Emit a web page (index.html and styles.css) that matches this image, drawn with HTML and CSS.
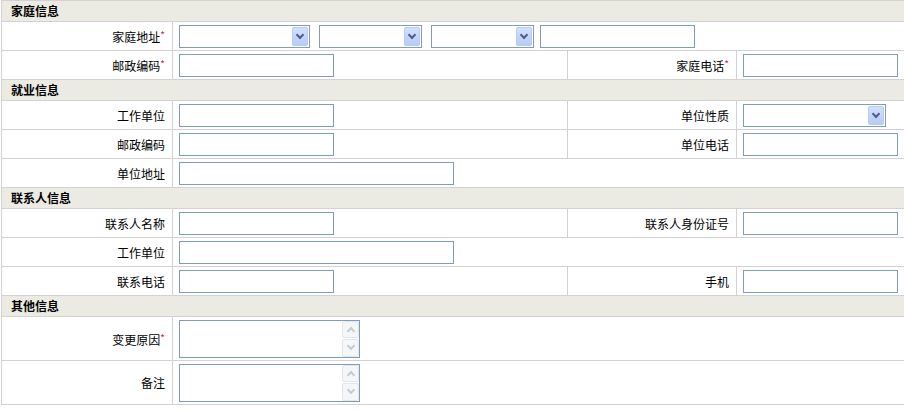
FILE: index.html
```html
<!DOCTYPE html>
<html lang="zh-CN">
<head>
  <meta charset="UTF-8">
  <title>信息变更</title>
  <link rel="stylesheet" href="styles.css">
</head>
<body>
  <table class="form">
    <colgroup>
      <col class="c-label">
      <col class="c-field">
      <col class="c-label2">
      <col class="c-field2">
    </colgroup>

    <tr class="section"><th colspan="4">家庭信息</th></tr>
    <tr>
      <td class="label">家庭地址<span class="req">*</span></td>
      <td class="field" colspan="3">
        <span class="sel province"><select></select><span class="arrow"></span></span>
        <span class="sel city"><select></select><span class="arrow"></span></span>
        <span class="sel district"><select></select><span class="arrow"></span></span>
        <input type="text" class="txt">
      </td>
    </tr>
    <tr>
      <td class="label">邮政编码<span class="req">*</span></td>
      <td class="field"><input type="text" class="txt"></td>
      <td class="label">家庭电话<span class="req">*</span></td>
      <td class="field"><input type="text" class="txt"></td>
    </tr>

    <tr class="section"><th colspan="4">就业信息</th></tr>
    <tr>
      <td class="label">工作单位</td>
      <td class="field"><input type="text" class="txt"></td>
      <td class="label">单位性质</td>
      <td class="field"><span class="sel kind"><select></select><span class="arrow"></span></span></td>
    </tr>
    <tr>
      <td class="label">邮政编码</td>
      <td class="field"><input type="text" class="txt"></td>
      <td class="label">单位电话</td>
      <td class="field"><input type="text" class="txt"></td>
    </tr>
    <tr>
      <td class="label">单位地址</td>
      <td class="field" colspan="3"><input type="text" class="txt wide"></td>
    </tr>

    <tr class="section"><th colspan="4">联系人信息</th></tr>
    <tr>
      <td class="label">联系人名称</td>
      <td class="field"><input type="text" class="txt"></td>
      <td class="label">联系人身份证号</td>
      <td class="field"><input type="text" class="txt"></td>
    </tr>
    <tr>
      <td class="label">工作单位</td>
      <td class="field" colspan="3"><input type="text" class="txt wide"></td>
    </tr>
    <tr>
      <td class="label">联系电话</td>
      <td class="field"><input type="text" class="txt"></td>
      <td class="label">手机</td>
      <td class="field"><input type="text" class="txt"></td>
    </tr>

    <tr class="section"><th colspan="4">其他信息</th></tr>
    <tr class="tall">
      <td class="label">变更原因<span class="req">*</span></td>
      <td class="field" colspan="3">
        <span class="area"><textarea></textarea><span class="scroll"><span class="up"></span><span class="down"></span></span></span>
      </td>
    </tr>
    <tr class="tall">
      <td class="label">备注</td>
      <td class="field" colspan="3">
        <span class="area"><textarea></textarea><span class="scroll"><span class="up"></span><span class="down"></span></span></span>
      </td>
    </tr>
  </table>
</body>
</html>
```

FILE: styles.css
```css
body {
  margin: 0;
  padding: 0 0 0 1px;
  background: #fff;
  font-family: "Noto Sans CJK SC", "DejaVu Sans", sans-serif;
  font-size: 12px;
  color: #000;
}

.form {
  border-collapse: collapse;
  table-layout: fixed;
  width: 904px;
}

.c-label { width: 171px; }
.c-field { width: 395px; }
.c-label2 { width: 169px; }
.c-field2 { width: 169px; }

.form td, .form th {
  border: 1px solid #d2d2d2;
  padding: 0;
  height: 28px;
  white-space: nowrap;
}

.section th {
  background: #ebebe3;
  height: 20px;
  text-align: left;
  padding-left: 9px;
  font-weight: bold;
  font-size: 12px;
  line-height: 20px;
}

.label {
  text-align: right;
  padding-right: 7px !important;
}

.req {
  color: #d0205a;
  font-size: 10px;
  vertical-align: 3px;
}

.field {
  padding-left: 6px !important;
  font-size: 0;
}

.txt {
  box-sizing: border-box;
  width: 155px;
  height: 23px;
  margin: 0;
  border: 1px solid #7f9db9;
  padding: 0 3px;
  font: 12px "Noto Sans CJK SC", sans-serif;
  vertical-align: middle;
  outline: none;
}

.txt.wide { width: 275px; }

/* select with XP style arrow */
.sel {
  position: relative;
  display: inline-block;
  height: 23px;
  vertical-align: middle;
}
.sel select {
  -webkit-appearance: none;
  appearance: none;
  box-sizing: border-box;
  width: 100%;
  height: 23px;
  margin: 0;
  border: 1px solid #7f9db9;
  background: #fff;
  outline: none;
}
.sel .arrow {
  position: absolute;
  right: 2px;
  top: 2px;
  width: 16px;
  height: 19px;
  box-sizing: border-box;
  border: 1px solid #b9cbf3;
  border-radius: 2px;
  background: linear-gradient(#d3e0fd, #b6cbf6);
}
.sel .arrow::after {
  content: "";
  position: absolute;
  left: 4px;
  top: 4px;
  width: 4px;
  height: 4px;
  border-right: 2px solid #4d6185;
  border-bottom: 2px solid #4d6185;
  transform: rotate(45deg);
}
.province { width: 131px; margin-right: 9px; }
.city { width: 103px; margin-right: 9px; }
.district { width: 103px; margin-right: 6px; }
.kind { width: 143px; }

/* textarea with disabled-looking scroll arrows */
.area {
  position: relative;
  display: inline-block;
  width: 181px;
  height: 38px;
  vertical-align: middle;
}
.area textarea {
  box-sizing: border-box;
  width: 100%;
  height: 100%;
  margin: 0;
  border: 1px solid #7f9db9;
  resize: none;
  overflow: hidden;
  outline: none;
}
.scroll {
  position: absolute;
  right: 1px;
  top: 1px;
  bottom: 1px;
  width: 17px;
  display: flex;
  flex-direction: column;
  gap: 1px;
  background: #fff;
}
.scroll span {
  position: relative;
  flex: 1;
  border: 1px solid #e2e6ee;
  border-radius: 2px;
  background: #f5f6f8;
}
.scroll span::after {
  content: "";
  position: absolute;
  left: 5px;
  width: 4px;
  height: 4px;
  border-left: 2px solid #c6ccd6;
  border-top: 2px solid #c6ccd6;
}
.scroll .up::after { top: 6px; transform: rotate(45deg); }
.scroll .down::after { top: 3px; transform: rotate(225deg); }

.tall td { height: 43px; }
```
